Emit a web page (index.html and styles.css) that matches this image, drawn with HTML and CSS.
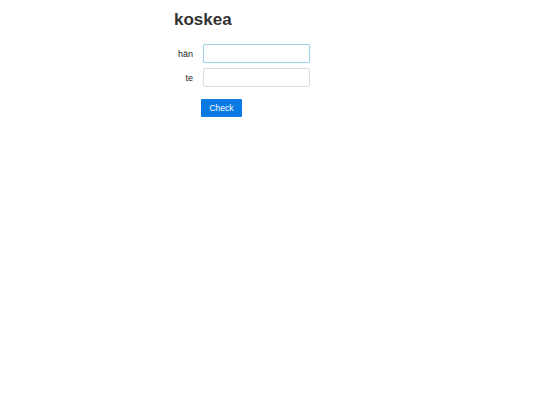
FILE: index.html
```html
<!DOCTYPE html>
<html lang="fi">
<head>
<meta charset="utf-8">
<title>koskea</title>
<link rel="stylesheet" href="styles.css">
</head>
<body>
<main class="page">
  <h1 class="title">koskea</h1>
  <form class="quiz">
    <div class="row">
      <label class="label" for="f1">hän</label>
      <input class="field field-focus" id="f1" type="text">
    </div>
    <div class="row">
      <label class="label" for="f2">te</label>
      <input class="field" id="f2" type="text">
    </div>
    <div class="actions">
      <button class="btn" type="button">Check</button>
    </div>
  </form>
</main>
</body>
</html>
```

FILE: styles.css
```css
html, body {
  margin: 0;
  padding: 0;
  background: #fff;
}
body {
  font-family: "Liberation Sans", Arial, sans-serif;
  color: #333;
}
.page {
  padding-left: 174px;
  padding-top: 10px;
}
.title {
  margin: 0;
  font-size: 17px;
  font-weight: bold;
  line-height: 20px;
  color: #333;
}
.quiz {
  margin-top: 14px;
  width: 140px;
}
.row {
  display: flex;
  align-items: center;
  margin-bottom: 5px;
}
.label {
  width: 19px;
  text-align: right;
  font-size: 9px;
  color: #222;
  margin-right: 10px;
}
.field {
  box-sizing: border-box;
  width: 107px;
  height: 19px;
  margin: 0;
  padding: 0 4px;
  border: 1px solid #dddddd;
  border-radius: 2px;
  background: #fff;
  outline: none;
}
.field-focus {
  border-color: #9fd0e8;
  box-shadow: 0 0 1px #bfe3f2;
}
.actions {
  padding-left: 27px;
  padding-top: 7px;
}
.btn {
  display: block;
  box-sizing: border-box;
  width: 41px;
  height: 18px;
  margin: 0;
  padding: 0;
  border: none;
  border-radius: 1px;
  background: #0a7be3;
  color: #fff;
  font-family: "Liberation Sans", Arial, sans-serif;
  font-size: 8.5px;
}
```
